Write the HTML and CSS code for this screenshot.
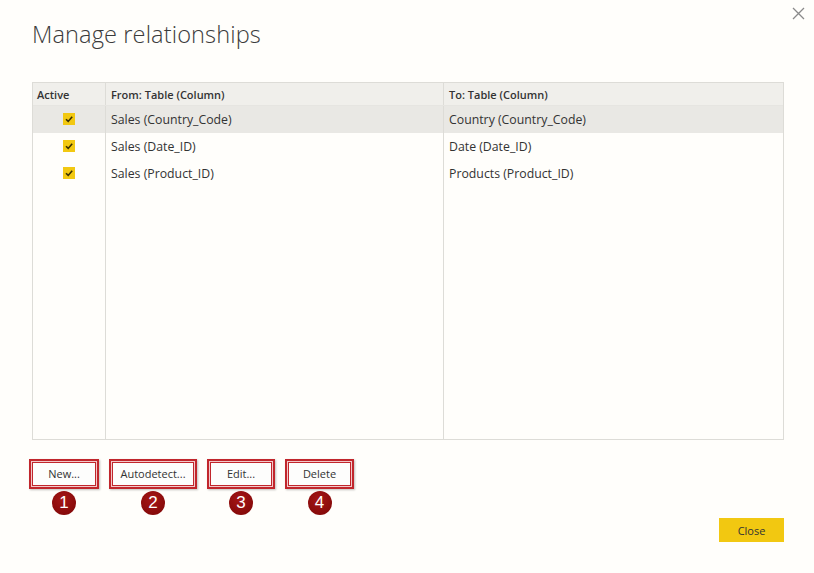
FILE: index.html
```html
<!DOCTYPE html>
<html>
<head>
<meta charset="utf-8">
<link rel="stylesheet" href="styles.css">
</head>
<body>
<div class="dialog">
  <div class="header">
    <h1 class="title">Manage relationships</h1>
    <button class="close-x" aria-label="Close">
      <svg width="13" height="13" viewBox="0 0 13 13"><path d="M1 1L12 12M12 1L1 12" stroke="#8a8a8a" stroke-width="1.3" fill="none"/></svg>
    </button>
  </div>

  <div class="table">
    <div class="row head">
      <div class="cell c1">Active</div>
      <div class="cell c2">From: Table (Column)</div>
      <div class="cell c3">To: Table (Column)</div>
    </div>
    <div class="row selected">
      <div class="cell c1"><span class="check"><svg width="12" height="12" viewBox="0 0 12 12"><path d="M3 6.2L5.2 8.4L9.2 3.8" stroke="#3a3000" stroke-width="1.6" fill="none"/></svg></span></div>
      <div class="cell c2">Sales (Country_Code)</div>
      <div class="cell c3">Country (Country_Code)</div>
    </div>
    <div class="row">
      <div class="cell c1"><span class="check"><svg width="12" height="12" viewBox="0 0 12 12"><path d="M3 6.2L5.2 8.4L9.2 3.8" stroke="#3a3000" stroke-width="1.6" fill="none"/></svg></span></div>
      <div class="cell c2">Sales (Date_ID)</div>
      <div class="cell c3">Date (Date_ID)</div>
    </div>
    <div class="row">
      <div class="cell c1"><span class="check"><svg width="12" height="12" viewBox="0 0 12 12"><path d="M3 6.2L5.2 8.4L9.2 3.8" stroke="#3a3000" stroke-width="1.6" fill="none"/></svg></span></div>
      <div class="cell c2">Sales (Product_ID)</div>
      <div class="cell c3">Products (Product_ID)</div>
    </div>
    <div class="row filler">
      <div class="cell c1"></div>
      <div class="cell c2"></div>
      <div class="cell c3"></div>
    </div>
  </div>

  <div class="actions">
    <div class="action a-new">
      <div class="hl"><button class="btn">New...</button></div>
      <span class="num">1</span>
    </div>
    <div class="action a-auto">
      <div class="hl"><button class="btn">Autodetect...</button></div>
      <span class="num">2</span>
    </div>
    <div class="action a-edit">
      <div class="hl"><button class="btn">Edit...</button></div>
      <span class="num">3</span>
    </div>
    <div class="action a-del">
      <div class="hl"><button class="btn">Delete</button></div>
      <span class="num">4</span>
    </div>
  </div>

  <div class="footer">
    <button class="close-btn">Close</button>
  </div>
</div>
</body>
</html>
```

FILE: styles.css
```css
html, body {
  margin: 0;
  padding: 0;
  background: #fffefb;
}
body {
  width: 814px;
  height: 573px;
  overflow: hidden;
  font-family: "Open Sans", "Noto Sans", sans-serif;
  color: #333;
}
.dialog {
  display: flex;
  flex-direction: column;
  height: 573px;
}
.header {
  display: flex;
  justify-content: space-between;
  align-items: flex-start;
  padding: 0 8px 0 32px;
  height: 82px;
}
.title {
  margin: 17px 0 0 0;
  font-weight: 300;
  font-size: 23.6px;
  letter-spacing: 0.1px;
  color: #3b3b3b;
  line-height: 34px;
}
.close-x {
  margin-top: 7px;
  border: none;
  background: none;
  padding: 0;
  width: 14px;
  height: 14px;
  display: flex;
}
.table {
  margin: 0 30px 0 32px;
  height: 358px;
  box-sizing: border-box;
  border: 1px solid #dddcd7;
  display: flex;
  flex-direction: column;
}
.row {
  display: grid;
  grid-template-columns: 73px 338px 1fr;
  height: 27px;
}
.row.head {
  height: 22px;
  background: #f0efeb;
  border-bottom: 1px solid #e6e5e1;
}
.row.selected {
  background: #e9e8e4;
}
.row.filler {
  flex: 1;
  height: auto;
}
.cell {
  display: flex;
  align-items: center;
  font-size: 12.3px;
  color: #333;
  padding-left: 5px;
  white-space: nowrap;
  padding-bottom: 1px;
}
.cell.c1 {
  border-right: 1px solid #dddcd7;
  justify-content: center;
  padding-left: 0;
}
.cell.c2 {
  border-right: 1px solid #dddcd7;
}
.head .cell {
  font-size: 11px;
  font-weight: 600;
  color: #333;
  padding-bottom: 0;
}
.head .cell.c1 {
  justify-content: flex-start;
  padding-left: 4px;
}
.check {
  width: 12px;
  height: 12px;
  background: #f2c811;
  display: flex;
  margin-left: 0;
}
.actions {
  display: flex;
  padding: 19px 0 0 29px;
  gap: 10px;
}
.action {
  display: flex;
  flex-direction: column;
  align-items: center;
  gap: 2px;
}
.hl {
  border: 2px solid #c1262c;
  box-shadow: inset 0 0 0 1px #f3c9ca, inset 0 0 0 2px #c1262c, 1px 1px 2px rgba(0,0,0,0.25);
  padding: 2px;
  background: #fff;
  height: 30px;
  box-sizing: border-box;
  display: flex;
}
.btn {
  border: none;
  background: #fdfdfc;
  font-family: "Open Sans", "Noto Sans", sans-serif;
  font-size: 11px;
  color: #333;
  padding: 0;
  height: 22px;
  line-height: 22px;
  width: 100%;
}
.a-new .hl { width: 70px; }
.a-auto .hl { width: 88px; }
.a-edit .hl { width: 68px; }
.a-del .hl { width: 69px; }
.num {
  width: 24px;
  height: 24px;
  border-radius: 50%;
  background: radial-gradient(circle at 45% 35%, #a51616, #7c0606);
  color: #fff;
  font-family: "Liberation Sans", Arial, sans-serif;
  font-weight: normal;
  font-size: 17px;
  display: flex;
  align-items: center;
  justify-content: center;
}
.footer {
  display: flex;
  justify-content: flex-end;
  padding: 3px 30px 0 0;
}
.close-btn {
  width: 65px;
  height: 24px;
  background: #f2c811;
  border: none;
  font-family: "Open Sans", "Noto Sans", sans-serif;
  font-size: 11px;
  color: #333;
  padding: 0;
}
```
